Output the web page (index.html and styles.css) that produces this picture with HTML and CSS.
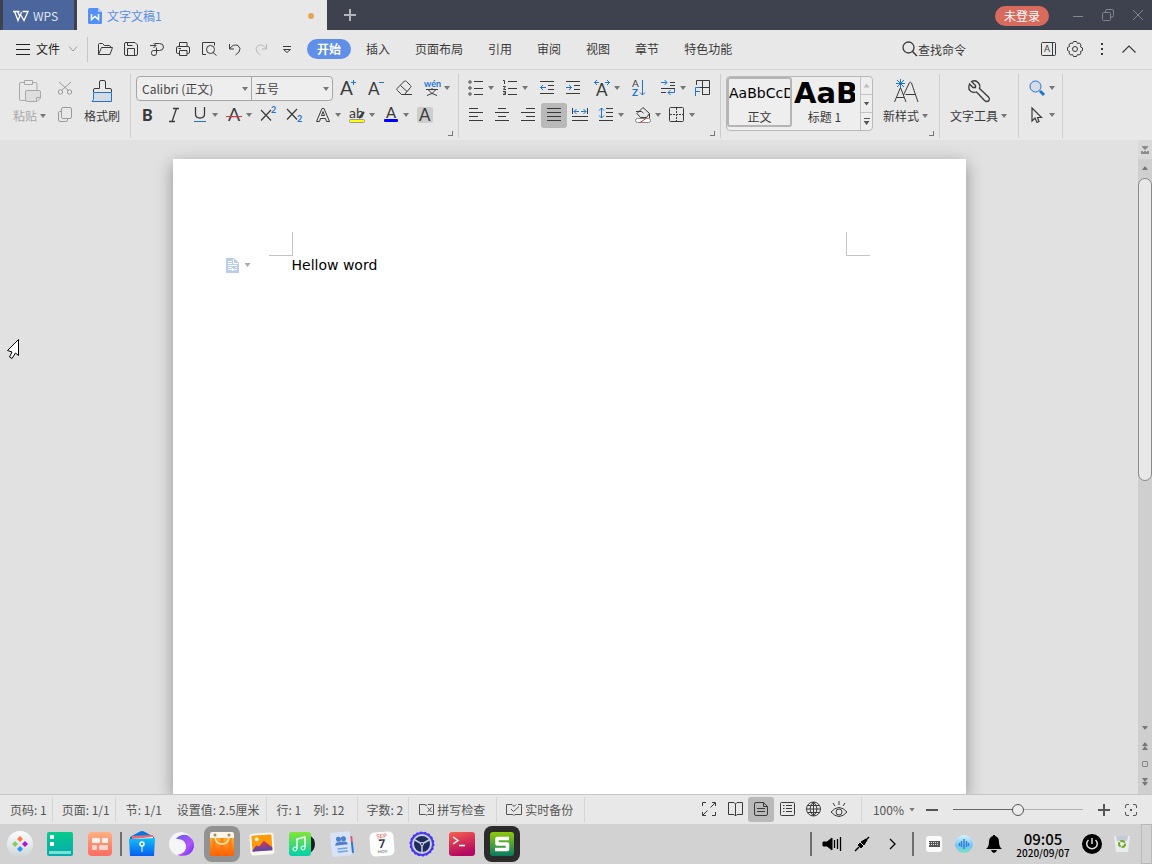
FILE: index.html
```html
<!DOCTYPE html>
<html lang="zh-CN">
<head>
<meta charset="utf-8">
<title>文字文稿1 - WPS</title>
<link rel="stylesheet" href="styles.css">
</head>
<body>
<header class="titlebar">
  <button class="wps-home"><svg class="ic" width="16" height="12" viewBox="0 0 16 12"><path class="logo-stroke" d="M0 1.500H6.500M1.500 1.500L5 10.500L8.500 2M4.500 1.500L7 7M7.500 4.500L11 10.500L15 1.500H9.500"/></svg>WPS</button>
  <div class="doc-tab"><svg width="14" height="16" viewBox="0 0 14 16"><path fill="#5590f5" d="M1.500 0H10L14 4V14.500Q14 16 12.500 16H1.500Q0 16 0 14.500V1.500Q0 0 1.500 0Z"/><path fill="#b4cdfb" d="M10 0L14 4H11Q10 4 10 3Z"/><path fill="none" stroke="#fff" stroke-width="1.500" d="M3.500 6V11.500L7 8.500L10.500 11.500V6"/></svg><span>文字文稿1</span><i class="unsaved"></i></div>
  <button class="new-tab" aria-label="新建"><svg class="ic" width="12" height="12"><path stroke-width="2" d="M6 0V12M0 6H12"/></svg></button>
  <button class="login">未登录</button>
  <div class="win-buttons">
    <button aria-label="最小化"><svg class="ic" width="12" height="12"><path d="M1 7.500H11"/></svg></button>
    <button aria-label="还原"><svg class="ic" width="12" height="12"><path d="M3.500 3.500V2Q3.500 .5 5 .5H10Q11.500 .5 11.500 2V6.500Q11.500 8 10 8H8.500"/><rect x=".5" y="3.500" width="8" height="8" rx="1"/></svg></button>
    <button aria-label="关闭"><svg class="ic" width="12" height="12"><path d="M1 1L11 11M11 1L1 11"/></svg></button>
  </div>
</header>

<nav class="menubar">
  <button class="file-menu"><svg class="ic" width="14" height="11"><path d="M0 .5H14M0 5.500H14M0 10.500H14"/></svg>文件<svg class="ic faint" width="10" height="6"><path d="M1 .5L5 5L9 .5"/></svg></button>
  <div class="quick">
    <button class="tool" aria-label="打开"><svg class="ic" width="16" height="16"><path d="M1.500 13.500V3.500Q1.500 2.500 2.500 2.500H5.500L7.500 4.500H12.500Q13.500 4.500 13.500 6.500M1.500 13.500L4.500 6.500H15.500L13 13.500Z"/></svg></button>
    <button class="tool" aria-label="保存"><svg class="ic" width="16" height="16"><path d="M1.500 3Q1.500 1.500 3 1.500H12L14.500 4V13Q14.500 14.500 13 14.500H3Q1.500 14.500 1.500 13ZM4.500 14.500V7.500H11.500V14.500M4.500 1.500V4.500H9.500"/></svg></button>
    <button class="tool" aria-label="输出为PDF"><svg class="ic" width="16" height="16"><path d="M1 4.500H7M4.500 2L7 4.500L4.500 7M6 2.500H10.500Q14.500 2.500 14.500 6Q14.500 9.500 10.500 9.500H4.500Q2.500 9.500 2.500 11.500V12.500Q2.500 14.500 5 14.500Q7.500 14.500 7.500 12.500V6.500"/></svg></button>
    <button class="tool" aria-label="打印"><svg class="ic" width="16" height="16"><path d="M4.500 5.500V1.500H12V5.500M4 12.500H2.500Q1.500 12.500 1.500 11V7Q1.500 5.500 3 5.500H13Q14.500 5.500 14.500 7V11Q14.500 12.500 13.500 12.500H12M4.500 9.500H12V14.500H4.500ZM3.500 7.500H6"/></svg></button>
    <button class="tool" aria-label="打印预览"><svg class="ic" width="16" height="16"><path d="M5 13.500H1.500V1.500H13.500V4.500M12 11.500L15.500 14.500"/><circle cx="9.500" cy="8.500" r="4"/></svg></button>
    <button class="tool" aria-label="撤销"><svg class="ic" width="16" height="16"><path d="M2.500 3V8H7M2.500 8Q6 2.500 11 4.500Q14.500 7.500 12 11L8.500 14"/></svg></button>
    <button class="tool pale" aria-label="恢复"><svg class="ic" width="16" height="16"><path d="M13.500 3V8H9M13.500 8Q10 2.500 5 4.500Q1.500 7.500 4 11L7.500 14"/></svg></button>
    <button class="tool" aria-label="自定义快速访问"><svg class="ic" width="16" height="16"><path d="M4 5.500H12M4.500 8.500H11.500L8 11.500Z"/></svg></button>
  </div>
  <div class="tabs">
    <button class="on">开始</button><button>插入</button><button>页面布局</button><button>引用</button><button>审阅</button><button>视图</button><button>章节</button><button>特色功能</button>
  </div>
  <label class="search"><svg class="ic" width="16" height="16"><circle cx="6.500" cy="6.500" r="5.500" stroke-width="1.300"/><path stroke-width="1.500" d="M10.500 10.500L15 15"/></svg><input type="text" placeholder="查找命令" aria-label="查找命令"></label>
  <div class="menu-right">
    <button class="tool" aria-label="皮肤"><svg class="ic" width="16" height="16"><rect x="1.500" y="1.500" width="14" height="13" rx="1"/><path d="M12.500 1.500V14.500"/><text class="letter" x="4" y="11" font-size="9">A</text></svg></button>
    <button class="tool" aria-label="设置"><svg class="ic" width="16" height="16"><path stroke-linejoin="round" d="M6.500 .5H9.500L10.500 2.500L12.500 2L14 4L13.500 6L15.500 7V9.500L13.500 10.500L14 12.500L12 14L10.500 13.500L9.500 15.500H6.500L5.500 13.500L3.500 14L2 12L2.500 10.500L.5 9.500V6.500L2.500 5.500L2 3.500L4 2L5.500 2.500Z"/><circle cx="8" cy="8" r="2.500"/></svg></button>
    <button class="tool" aria-label="更多"><svg class="solid" width="16" height="16"><path d="M7 2h2v2h-2zM7 7h2v2h-2zM7 12h2v2h-2z"/></svg></button>
    <button class="tool" aria-label="折叠功能区"><svg class="ic" width="16" height="16"><path stroke-width="1.200" d="M1.500 11.500L8 5L14.500 11.500"/></svg></button>
  </div>
</nav>

<section class="ribbon">
  <div class="group clip">
    <button class="big off"><svg class="ic" width="22" height="22"><path d="M7 20.500H2Q.5 20.500 .5 19V4Q.5 2.500 2 2.500H5M14 2.500H16.500Q18 2.500 18 4V10M5.500 .5H13.500V4.500H5.500Z"/><path fill="#dedede" d="M7.500 10.500H20Q21.500 10.500 21.500 12V18L18 21.500H9Q6.500 21.500 6.500 20V12Q6.500 10.500 8 10.500ZM21.500 17.500H17.500V21.500"/></svg><span>粘贴<i class="caret"></i></span></button>
    <div class="rows">
      <button class="tool faint" aria-label="剪切"><svg class="ic" width="16" height="16"><path d="M2 2L11.500 10.500M14 2L4.500 10.500"/><circle cx="3.500" cy="12" r="2.200"/><circle cx="12.500" cy="12" r="2.200"/></svg></button>
      <button class="tool faint" aria-label="复制"><svg class="ic" width="16" height="16"><path d="M4 4.500H2.500Q1.500 4.500 1.500 6V13Q1.500 14.500 3 14.500H9Q10.500 14.500 10.500 13V11.500"/><rect x="4.500" y=".5" width="10" height="11" rx="1.500"/></svg></button>
    </div>
    <button class="big"><svg class="ic" width="22" height="22"><path fill="#d6dce6" class="b" d="M2.500 12.500H20.500V21.500H1L2.500 19.500Z"/><path d="M2.500 12V10Q2.500 8.500 4 8.500H8.500V2Q8.500 .5 10 .5H13Q14.500 .5 14.500 2V8.500H19Q20.500 8.500 20.500 10V12"/></svg><span>格式刷</span></button>
  </div>

  <div class="group font-group">
    <div class="row loose">
      <div class="combo">
        <label class="family"><select aria-label="字体"><option>Calibri (正文)</option></select></label>
        <label class="size"><select aria-label="字号"><option>五号</option></select></label>
      </div>
      <button class="tool" aria-label="增大字号"><svg class="ic" width="16" height="16"><text class="letter" x="0" y="15" font-size="19">A</text><path class="b" d="M11 2.500H16M13.500 0V5"/></svg></button>
      <button class="tool" aria-label="减小字号"><svg class="ic" width="16" height="16"><text class="letter" x="0" y="15" font-size="17">A</text><path class="b" d="M11 2.500H16"/></svg></button>
      <button class="tool" aria-label="清除格式"><svg class="ic" width="16" height="16"><path d="M1 8.500L8.500 1Q9.500 .5 10.500 1.500L14.500 5.500Q15.500 6.500 14.500 7.500L8.500 14.500H5.500L1.500 10.500Q.5 9.500 1 8.500ZM4.500 5.500L11 11.500M6 14.500H16"/></svg></button>
      <button class="tool dd" aria-label="拼音指南"><svg class="ic" width="16" height="16"><text class="letter blue" x="0" y="7" font-size="9">wén</text><path d="M2 9.500H14M8 8V9.500M4.500 10Q7 14 13 15.500M11.500 10Q9 14 3 15.500"/></svg><i class="caret"></i></button>
    </div>
    <div class="row">
      <div class="cluster">
        <button class="tool" aria-label="加粗"><svg class="ic" width="16" height="16"><text class="letter heavy" x="2" y="14" font-size="16">B</text></svg></button>
        <button class="tool" aria-label="倾斜"><svg class="ic" width="16" height="16"><path stroke-width="1.300" d="M7 1.500H13M3 14.500H9M10.500 1.500L6 14.500"/></svg></button>
        <button class="tool dd" aria-label="下划线"><svg class="ic" width="16" height="16"><path stroke-width="1.300" d="M3.500 0V7Q3.500 11 8 11Q12.500 11 12.500 7V0"/><path class="b" d="M2 14.500H14"/></svg><i class="caret"></i></button>
        <button class="tool dd" aria-label="删除线"><svg class="ic" width="16" height="16"><text class="letter" x="2" y="14" font-size="18">A</text><path class="r" d="M0 9.500H16"/></svg><i class="caret"></i></button>
        <button class="tool" aria-label="上标"><svg class="ic" width="16" height="16"><path stroke-width="1.200" d="M1 3L11 13.500M11 3L1 13.500"/><text class="letter blue" x="11" y="6" font-size="9">2</text></svg></button>
        <button class="tool" aria-label="下标"><svg class="ic" width="16" height="16"><path stroke-width="1.200" d="M1 2L11 12.500M11 2L1 12.500"/><text class="letter blue" x="11" y="15" font-size="9">2</text></svg></button>
      </div>
      <div class="cluster">
        <button class="tool dd" aria-label="文字效果"><svg class="ic" width="16" height="16"><path d="M1.500 14.500L7 1.500H9L14.500 14.500H11.500L10.500 11.500H5.500L4.500 14.500ZM6.500 8.500L8 4.500L9.500 8.500Z"/></svg><i class="caret"></i></button>
        <button class="tool dd" aria-label="突出显示"><svg class="ic" width="16" height="16"><rect x=".5" y="12.500" width="15" height="3" rx="1" fill="#ff0" stroke="#999"/><text class="letter" x="0" y="11" font-size="14">ab</text><path stroke-width="2" d="M10 11L15 5"/></svg><i class="caret"></i></button>
        <button class="tool dd" aria-label="字体颜色"><svg class="ic" width="16" height="16"><text class="letter" x="3" y="11" font-size="15">A</text><rect x="1" y="12" width="14" height="3" rx="1" fill="#00f" stroke="none"/></svg><i class="caret"></i></button>
        <button class="tool" aria-label="字符底纹"><svg class="ic" width="16" height="16"><rect width="16" height="16" rx="2" fill="#cdcdcd" stroke="none"/><text class="letter" x="2" y="14" font-size="17">A</text></svg></button>
      </div>
    </div>
    <i class="launcher"></i>
  </div>

  <div class="group para-group">
    <div class="row">
      <div class="cluster">
        <button class="tool dd" aria-label="项目符号"><svg class="ic" width="16" height="16"><path d="M6 1.500H15M6 8.500H15M6 14.500H15"/><circle cx="2" cy="2" r="1.200"/><circle cx="2" cy="8" r="1.200"/><circle cx="2" cy="14" r="1.200"/></svg><i class="caret"></i></button>
        <button class="tool dd" aria-label="编号"><svg class="ic" width="16" height="16"><path d="M6 1.500H15M6 8.500H15M6 14.500H15M1 .5H2.500V4M1 6.500H3.500L1.500 9.500H4M1 11.500H3.500V14.500H1M1.500 13H3.500"/></svg><i class="caret"></i></button>
      </div>
      <div class="cluster">
        <button class="tool" aria-label="减少缩进"><svg class="ic" width="16" height="16"><path d="M1 1.500H15M9 5.500H15M9 9.500H15M1 13.500H15"/><path class="b" d="M1 7.500H7M4 5L1.500 7.500L4 10"/></svg></button>
        <button class="tool" aria-label="增加缩进"><svg class="ic" width="16" height="16"><path d="M1 1.500H15M9 5.500H15M9 9.500H15M1 13.500H15"/><path class="b" d="M1 7.500H7M4 5L6.500 7.500L4 10"/></svg></button>
      </div>
      <button class="tool dd" aria-label="字符缩放"><svg class="ic" width="16" height="16"><path class="b" d="M0 2.500H5M3 0L.5 2.500L3 5M11 2.500H16M13 0L15.500 2.500L13 5"/><text class="letter" x="2" y="16" font-size="17">A</text></svg><i class="caret"></i></button>
      <button class="tool" aria-label="排序"><svg class="ic" width="16" height="16"><text class="letter" x="1" y="7" font-size="10">A</text><text class="letter blue" x="1" y="16" font-size="10">Z</text><path class="b" d="M11.500 0V15M9 12.500L11.500 15L14 12.500"/></svg></button>
      <div class="cluster">
        <button class="tool dd" aria-label="显示编辑标记"><svg class="ic" width="16" height="16"><path d="M10 2.500H15M10 5.500H15M1 8.500H15M1 12.500H6"/><path class="b" d="M1 2.500H7M4.500 0L7 2.500L4.500 5M14.500 9V12.500H8M10.500 10L8 12.500L10.500 15"/></svg><i class="caret"></i></button>
        <button class="tool" aria-label="制表位"><svg class="ic" width="16" height="16"><path d="M2.500 5V.5H15.500V14.500H8M8.500 .5V14M5 7.500H15"/><path class="b" d="M1.500 16V7.500H6M1.500 11.500H6"/></svg></button>
      </div>
    </div>
    <div class="row">
      <div class="cluster">
        <button class="tool" aria-label="左对齐"><svg class="ic" width="16" height="16"><path d="M1 1.500H10M1 5.500H15M1 9.500H10M1 13.500H15"/></svg></button>
        <button class="tool" aria-label="居中"><svg class="ic" width="16" height="16"><path d="M4 1.500H12M1 5.500H15M4 9.500H12M1 13.500H15"/></svg></button>
        <button class="tool" aria-label="右对齐"><svg class="ic" width="16" height="16"><path d="M6 1.500H15M1 5.500H15M6 9.500H15M1 13.500H15"/></svg></button>
        <button class="tool pressed" aria-label="两端对齐"><svg class="ic" width="16" height="16"><path d="M1 1.500H15M1 5.500H15M1 9.500H15M1 13.500H15"/></svg></button>
        <button class="tool" aria-label="分散对齐"><svg class="ic" width="16" height="16"><path d="M.5 1V7M15.500 1V7M0 9.500H16M0 13.500H16"/><path class="b" d="M2 4.500H7M4.500 2L2 4.500L4.500 7M9 4.500H14M11.500 2L14 4.500L11.500 7"/></svg></button>
        <button class="tool dd" aria-label="行距"><svg class="ic" width="16" height="16"><path d="M8 1.500H15M8 5.500H15M8 9.500H15M1 13.500H15"/><path class="b" d="M3.500 1V11M1 3.500L3.500 1L6 3.500M1 8.500L3.500 11L6 8.500"/></svg><i class="caret"></i></button>
      </div>
      <div class="cluster">
        <button class="tool dd" aria-label="底纹颜色"><svg class="ic" width="16" height="16"><path d="M2 6.500L8 .5L14.500 6.500L11.500 10.500H5.500ZM1 4.500H6.500L8.500 6M14.500 6.500V11"/><rect x=".5" y="11.500" width="15" height="4" rx="2" fill="#fff" stroke="#888"/><path class="r" d="M5 15.500L11 11.500"/></svg><i class="caret"></i></button>
        <button class="tool dd" aria-label="边框"><svg class="ic" width="16" height="16"><rect x=".5" y=".5" width="14" height="14" rx="1"/><path stroke-dasharray="2 1" d="M7.500 1V14M1 7.500H14"/></svg><i class="caret"></i></button>
      </div>
    </div>
    <i class="launcher"></i>
  </div>

  <div class="group style-group">
    <div class="gallery">
      <button class="style-item chosen"><span class="preview">AaBbCcD</span><span class="name">正文</span></button>
      <button class="style-item"><span class="preview heading">AaB</span><span class="name">标题 1</span></button>
      <div class="gallery-nav">
        <button class="off" aria-label="上一行"><i class="caret up"></i></button>
        <button aria-label="下一行"><i class="caret"></i></button>
        <button class="all" aria-label="展开样式"><i class="bar"></i><i class="caret"></i></button>
      </div>
    </div>
    <button class="big"><svg class="ic" width="24" height="22"><path d="M.5 22L6.500 7.500L12 22M2.500 17.500H10M9.500 15L15.500 2.500Q16.500 1.500 17.500 3L24 22M11.500 14.500H21.500"/><path class="b" d="M6.500-1V8M2 3.500H11M3 0L10 7M10 0L3 7"/></svg><span>新样式<i class="caret"></i></span></button>
    <i class="launcher"></i>
  </div>

  <div class="group tools-group">
    <button class="big"><svg class="ic" width="22" height="22"><path stroke-width="1.300" d="M3.500 1.500L7.500 5.500V7.500H5L1.500 4Q-.5 9 3 11.500Q5.500 13 8.500 12L16.500 20.500Q19 22.500 21 20.500Q22 18.500 20.500 17L11.500 8.500Q12.500 5 10.500 3Q7.500 -.5 3.500 1.500Z"/></svg><span>文字工具<i class="caret"></i></span></button>
  </div>

  <div class="group find-group">
    <div class="rows">
      <button class="tool dd" aria-label="查找替换"><svg class="ic" width="16" height="16"><circle class="b" cx="6.500" cy="6.500" r="5.500" fill="#d5dce6"/><path class="b" stroke-width="3" d="M11 11L15 15"/></svg><i class="caret"></i></button>
      <button class="tool dd" aria-label="选择"><svg class="ic" width="16" height="16"><path stroke-width="1.200" d="M3 1V14L6 11L8 15.500L10 14.500L8.500 10.500H12.500Z"/></svg><i class="caret"></i></button>
    </div>
  </div>
</section>

<main class="workspace">
  <div class="canvas">
    <article class="paper">
      <div class="margin-marks"><i class="mark left"></i><i class="mark right"></i></div>
      <div class="line">
        <button class="para-menu" aria-label="段落布局"><svg width="13" height="15"><path fill="#b9cdea" d="M0 0H8L13 5V15H0Z"/><path fill="none" stroke="#fff" d="M7.500 1V5.500H12M2 3.500H6M2 5.500H6M2 7.500H11M2 9.500H6M2 11.500H11M6.500 10V13M9.500 9.500H11"/></svg><i class="caret"></i></button>
        <p>Hellow word</p>
      </div>
    </article>
  </div>
  <aside class="scrollbar">
    <button class="ruler" aria-label="标尺"><svg class="solid" width="8" height="8"><path d="M1 0H7V1L4 4L1 1ZM0 5H2V6H3V5H5V6H6V5H8V8H0Z"/></svg></button>
    <button class="step" aria-label="向上"><i class="caret up"></i></button>
    <div class="track"><div class="thumb"></div></div>
    <div class="jumps">
      <button aria-label="向下"><i class="caret"></i></button>
      <button aria-label="上一页"><i class="caret up"></i><i class="caret up"></i></button>
      <button aria-label="选择浏览对象"><i class="square"></i></button>
      <button aria-label="下一页"><i class="caret"></i><i class="caret"></i></button>
    </div>
  </aside>
  <svg class="pointer" width="14" height="22" viewBox="0 0 14 22"><path fill="#fff" stroke="#000" d="M11.500 1.500V17.500L8.500 15L5 20.500L2.500 19L5 14L.5 12.500L11.500 1.500Z"/></svg>
</main>

<footer class="statusbar">
  <span class="cell">页码: 1</span>
  <span class="cell">页面: 1/1</span>
  <span class="cell section"><span>节: 1/1</span><span>设置值: 2.5厘米</span></span>
  <span class="cell place"><span>行: 1</span><span>列: 12</span></span>
  <span class="cell">字数: 2</span>
  <button class="cell check"><svg class="ic" width="16" height="16"><path d="M9 13.500L7.500 12.500H1.500V2.500H7L8.500 4M10 2.500H15.500V12.500H9.500M8 2.500V4M9.500 5.500L13.500 10M13.500 5.500L9.500 10"/></svg>拼写检查</button>
  <button class="cell check"><svg class="ic" width="16" height="16"><path d="M8 13.500L7 12.500H.5V2.500H6L8 4.500L10 2.500M13 12.500H9L8 13.500M12 2.500H15.500V12.500H12M5 7L7.500 9.500L13 4.500"/></svg>实时备份</button>
  <div class="views">
    <button class="tool" aria-label="全屏显示"><svg class="ic" width="16" height="16"><path d="M1.500 5V1.500H5M11 1.500H14.500V5M14.500 11V14.500H11M5 14.500H1.500V11M2 14L6.500 9.500M14 2L9.500 6.500"/></svg></button>
    <button class="tool" aria-label="阅读版式"><svg class="ic" width="16" height="16"><path d="M8.500 15V3L7 1.500H1.500V13.500H7L8.500 15L10 13.500H15.500V1.500H10L8.500 3"/></svg></button>
    <button class="tool pressed" aria-label="页面视图"><svg class="ic" width="16" height="16"><path d="M1.500 3Q1.500 1.500 3 1.500H10.500L14.500 5.500V13Q14.500 14.500 13 14.500H3Q1.500 14.500 1.500 13ZM10.500 1.500V5.500H14.500M4 7.500H12M4 10.500H12"/></svg></button>
    <button class="tool" aria-label="大纲视图"><svg class="ic" width="16" height="16"><rect x="1.500" y="1.500" width="14" height="13" rx="1"/><path d="M4 4.500H5.500M7 4.500H13M4 7.500H5.500M7 7.500H13M4 10.500H5.500M7 10.500H13"/></svg></button>
    <button class="tool" aria-label="Web版式"><svg class="ic" width="16" height="16"><circle cx="8.500" cy="8" r="7"/><path d="M8.500 1V15M1.500 8H15.500M2.500 4.500H14.500M2.500 11.500H14.500M8.500 1Q1.500 8 8.500 15Q15.500 8 8.500 1"/></svg></button>
    <button class="tool" aria-label="护眼模式"><svg class="ic" width="16" height="16"><path d="M0 11Q8 2 16 11Q8 20 0 11ZM8 0V4M2 2L4 5M14 2L12 5"/><circle cx="8" cy="11" r="3"/></svg></button>
  </div>
  <div class="zoom">
    <button class="percent">100%<i class="caret"></i></button>
    <button aria-label="缩小"><svg class="ic" width="12" height="12"><path stroke-width="2" d="M0 6H12"/></svg></button>
    <input type="range" min="0" max="100" value="50" aria-label="缩放">
    <button aria-label="放大"><svg class="ic" width="12" height="12"><path stroke-width="2" d="M0 6H12M6 0V12"/></svg></button>
    <button class="fit" aria-label="适合页面"><svg class="ic" width="12" height="12"><path d="M.5 4V2Q.5 .5 2 .5H4M8 .5H10Q11.500 .5 11.500 2V4M11.500 8V10Q11.500 11.500 10 11.500H8M4 11.500H2Q.5 11.500 .5 10V8"/><path stroke-width="2" d="M5 6H7"/></svg></button>
  </div>
</footer>

<footer class="taskbar">
  <button aria-label="启动器"><svg width="28" height="28"><defs><linearGradient id="lau" x2="0" y2="1"><stop stop-color="#fdfdfd"/><stop offset="1" stop-color="#cdd6d8"/></linearGradient></defs><circle cx="14" cy="14" r="13" fill="url(#lau)"/><path fill="#ff7a45" d="M14 6L17 9L14 12L11 9Z"/><path fill="#8bc96a" d="M9 11L12 14L9 17L6 14Z"/><path fill="#b012dd" d="M19 11L22 14L19 17L16 14Z"/><path fill="#2c93f2" d="M14 16L17 19L14 22L11 19Z"/></svg></button>
  <button aria-label="多任务视图"><svg width="28" height="28"><defs><linearGradient id="mul" x2="0" y2="1"><stop stop-color="#07cc88"/><stop offset="1" stop-color="#06a9b4"/></linearGradient></defs><rect x="1" y="2" width="26" height="24" rx="2" fill="url(#mul)"/><path fill="#fff" d="M4 5h4v4h-4zM4 12h4v4h-4z"/><rect x="3" y="21" width="22" height="3" fill="#79e4cf"/></svg></button>
  <button aria-label="桌面"><svg width="28" height="28"><defs><linearGradient id="dsk" x2="0" y2="1"><stop stop-color="#ffb083"/><stop offset="1" stop-color="#ff6b61"/></linearGradient></defs><rect x="2" y="2" width="24" height="24" rx="4" fill="url(#dsk)"/><g fill="#fff1e9"><rect x="6" y="8" width="8" height="5" rx="1"/><rect x="16" y="8" width="6" height="5" rx="1"/><rect x="6" y="15" width="5" height="5" rx="1" opacity=".75"/><rect x="13" y="15" width="9" height="5" rx="1" opacity=".75"/></g></svg></button>
  <i class="split"></i>
  <button aria-label="文件管理器"><svg width="28" height="28"><defs><linearGradient id="fil" x2="0" y2="1"><stop stop-color="#12bff5"/><stop offset="1" stop-color="#075df1"/></linearGradient></defs><path fill="#0878de" d="M2 7L11 2Q14 0 17 2L26 7V13H2Z"/><path fill="#fff" d="M4 6H25V10H4Z"/><path fill="#f46a6a" d="M4 6L25 5V7L4 9Z"/><path fill="url(#fil)" d="M1 9L27 8L26 26H2Z"/><circle cx="14" cy="14" r="2" fill="none" stroke="#fff" stroke-width="1.500"/><path stroke="#fff" d="M14 16V22"/></svg></button>
  <button aria-label="浏览器"><svg width="28" height="28"><defs><linearGradient id="web" x2="1" y2="1"><stop stop-color="#5b5ff0"/><stop offset=".6" stop-color="#b354f7"/><stop offset="1" stop-color="#4b2df2"/></linearGradient></defs><circle cx="13" cy="14" r="12" fill="#f5f5f8"/><path fill="url(#web)" d="M8 9Q12 4 19 5Q27 9 26 17Q24 26 13 26L9 25Q19 23 18 15Q16 8 8 9Z"/></svg></button>
  <button class="running" aria-label="应用商店"><svg width="28" height="28"><defs><linearGradient id="bag" x2="0" y2="1"><stop stop-color="#ffab2e"/><stop offset="1" stop-color="#ff5b04"/></linearGradient></defs><path fill="#fff4e8" d="M4 2H24Q26 2 26 4V9H2V4Q2 2 4 2Z"/><path fill="url(#bag)" d="M2 8H26V24Q26 26 24 26H4Q2 26 2 24Z"/><path stroke="#f77505" stroke-width="3" opacity=".6" d="M6 8V26M14 8V26M22 8V26"/><path fill="none" stroke="#fff3d0" stroke-width="1.500" d="M7 5V8Q8 14 14 14Q20 14 21 8V5"/><circle cx="7" cy="5" r="1.500" fill="#ad8570"/><circle cx="21" cy="5" r="1.500" fill="#ad8570"/></svg></button>
  <button aria-label="相册"><svg width="28" height="28"><defs><linearGradient id="pic" x2="0" y2="1"><stop stop-color="#e8323c"/><stop offset="1" stop-color="#4a48b8"/></linearGradient></defs><g transform="rotate(-4 14 14)"><rect x="2" y="3" width="24" height="22" rx="3" fill="#faf6f0"/><rect x="4" y="5" width="20" height="16" rx="1" fill="#ff9a09"/><circle cx="9" cy="9" r="2" fill="#fff3c8"/><path fill="url(#pic)" d="M4 20L8 15L11 16L16 11L24 18V21H4Z"/></g></svg></button>
  <button aria-label="音乐"><svg width="28" height="28"><defs><linearGradient id="mus" x2="0" y2="1"><stop stop-color="#80e635"/><stop offset="1" stop-color="#03cfaf"/></linearGradient></defs><path fill="#122" d="M20 4Q27 8 27 14Q27 21 20 24Z"/><rect x="1" y="2" width="22" height="24" rx="3" fill="url(#mus)"/><path fill="none" stroke="#fff" stroke-width="1.500" d="M9 19V9L17 7V17"/><circle cx="7" cy="19" r="2" fill="none" stroke="#fff"/><circle cx="15" cy="18" r="2" fill="none" stroke="#fff"/></svg></button>
  <button aria-label="联系人"><svg width="28" height="28"><g transform="rotate(-6 14 14)"><path fill="#e95668" d="M22 7H25V13H22Z"/><path fill="#2c78df" d="M22 13H25V24H22Z"/><rect x="3" y="2" width="20" height="24" rx="2" fill="#d7e3f7"/><g fill="#4e7fcf"><circle cx="11" cy="9" r="2.500"/><circle cx="16" cy="9" r="2.500"/><path d="M7 15Q8 11 11 12Q14 11 16 12Q19 11 20 15Z"/></g><path stroke="#75a1e6" stroke-width="1.500" d="M9 18.500H19M9 21.500H19"/></g></svg></button>
  <button aria-label="日历"><svg width="28" height="28"><g transform="rotate(-4 14 14)"><rect x="2" y="2" width="24" height="24" rx="5" fill="#fff"/><text class="cal-month" x="14" y="8" font-size="6">SEP</text><text class="cal-day" x="14" y="18" font-size="12">7</text><text class="cal-week" x="14" y="23" font-size="4">MON</text></g></svg></button>
  <button aria-label="控制中心"><svg width="28" height="28"><circle cx="14" cy="14" r="11" fill="#c9cfdd" stroke="#4b3df0" stroke-width="2"/><circle cx="14" cy="14" r="11.500" fill="none" stroke="#4636ef" stroke-width="2" stroke-dasharray="2 2"/><circle cx="14" cy="14" r="8" fill="#1f2b5c"/><path stroke="#c9cfdd" stroke-width="1.500" d="M14 14V22M14 14L7 10M14 14L21 10"/><circle cx="14" cy="14" r="2" fill="#c9cfdd"/><circle cx="14" cy="14" r="1" fill="#1f2b5c"/></svg></button>
  <button aria-label="终端"><svg width="28" height="28"><defs><linearGradient id="ter" x2=".3" y2="1"><stop stop-color="#f7604a"/><stop offset="1" stop-color="#b40862"/></linearGradient></defs><rect x="1" y="2" width="26" height="24" rx="3" fill="url(#ter)"/><path fill="none" stroke="#fff" stroke-width="1.500" d="M5 7L10 10.500L5 14M11 15.500H17"/></svg></button>
  <button class="front" aria-label="WPS"><svg width="28" height="28"><defs><linearGradient id="wps" x2="0" y2="1"><stop stop-color="#91c80c"/><stop offset="1" stop-color="#087c61"/></linearGradient></defs><rect x="2" y="2" width="24" height="24" rx="3" fill="url(#wps)"/><path fill="none" stroke="#fff" stroke-width="3.500" stroke-linejoin="round" d="M21 8.500H9V14H19.500V19.500H7"/></svg></button>

  <div class="tray">
    <i class="split"></i>
    <div class="tray-set">
      <button aria-label="音量"><svg class="ic black" width="20" height="16"><path fill="#000" d="M1 6H5L10 2V14L5 10H1Z"/><path stroke-width="1.300" d="M12.500 4V12M15.500 3V13M18.500 1V15"/></svg></button>
      <button aria-label="网络"><svg class="ic black" width="16" height="16"><path stroke-width="1.500" d="M1 15L5 11M11 5L15 1"/><path fill="#000" d="M4 9L7 12L9 10L6 7ZM7 6L12 3L13 4L10 9Z"/></svg></button>
      <button aria-label="展开托盘"><svg class="ic black" width="10" height="12"><path stroke-width="1.300" d="M3 1L8 6L3 11"/></svg></button>
    </div>
    <i class="split"></i>
    <div class="tray-set">
      <button aria-label="键盘"><svg width="18" height="18"><rect x="1" y="1" width="16" height="16" rx="3" fill="#fafafa"/><rect x="4" y="6" width="11" height="6" fill="#555"/><path stroke="#ddd" stroke-dasharray="1 1" d="M4 7.500H14M4 9.500H14"/></svg></button>
      <button aria-label="语音助手"><svg width="18" height="18"><defs><linearGradient id="voi" x2="0" y2="1"><stop stop-color="#dcf3ff"/><stop offset=".6" stop-color="#6fc3f7"/><stop offset="1" stop-color="#78e4c0"/></linearGradient></defs><circle cx="9" cy="9" r="9" fill="url(#voi)"/><path stroke="#3480d2" stroke-width="1.500" d="M4.500 8V11M6.500 6V12M9 4V14M11.500 6V12M13.500 8V11"/></svg></button>
      <button aria-label="通知"><svg class="solid black" width="16" height="18"><path d="M7 0H9V1Q13 2 13 7Q13 12 16 14H0Q3 12 3 7Q3 2 7 1ZM5 15H11Q10 18 8 18Q6 18 5 15Z"/></svg></button>
    </div>
    <div class="clock"><time class="hour">09:05</time><time class="date">2020/09/07</time></div>
    <div class="tray-set">
      <button aria-label="电源"><svg width="20" height="20"><circle cx="10" cy="10" r="10"/><path fill="none" stroke="#ddd" stroke-width="1.500" d="M6.500 6Q3.500 9 5.500 12.500Q10 17 14.500 12.500Q16.500 9 13.500 6M10 4V10"/></svg></button>
      <button aria-label="回收站"><svg width="16" height="18"><path fill="#e9ecef" d="M0 1H16L14 17H2Z"/><path fill="#c3cad8" d="M2 1H14L13 6H3Z"/><circle cx="8" cy="9" r="3" fill="none" stroke="#74a51e" stroke-width="2" stroke-dasharray="5 1"/></svg></button>
    </div>
    <button class="show-desktop" aria-label="显示桌面"></button>
  </div>
</footer>
</body>
</html>
```
FILE: styles.css
```css
* { box-sizing: border-box; }

body {
  margin: 0;
  height: 100vh;
  display: flex;
  flex-direction: column;
  overflow: hidden;
  background: #e8e8e8;
  color: #3a3a3a;
  font: 12px/16px "Noto Sans CJK SC", sans-serif;
}

button {
  margin: 0;
  padding: 0;
  border: 0;
  background: none;
  color: inherit;
  font: inherit;
  white-space: nowrap;
}

svg { display: block; flex: none; }
.ic { fill: none; stroke: currentColor; stroke-width: 1; overflow: visible; }
.solid { fill: currentColor; }
.b { stroke: #1f74cf; }
.r { stroke: #d9383a; }
.black { color: #000; }
.faint { color: #9a9a9a; }
.pale { color: #b8b8b8; }

.letter { fill: #3a3a3a; stroke: none; font-family: Lato, sans-serif; font-weight: 400; }
.letter.heavy { font-weight: 900; }
.letter.blue { fill: #1f74cf; font-weight: 700; }

.caret {
  display: block;
  flex: none;
  width: 6px;
  height: 4px;
  background: #777;
  clip-path: polygon(0 0, 100% 0, 50% 100%);
}
.caret.up { clip-path: polygon(0 100%, 100% 100%, 50% 0); }

/* Title bar */
.titlebar {
  display: flex;
  align-items: center;
  flex: none;
  height: 30px;
  padding-left: 3px;
  background: #3e414e;
}
.wps-home {
  display: flex;
  align-items: center;
  gap: 4px;
  width: 71px;
  height: 30px;
  padding: 2px 0 0 10px;
  background: #4a669d;
  color: #dfe5f0;
}
.logo-stroke { stroke: #fff; stroke-width: 1.3; }
.doc-tab {
  display: flex;
  align-items: center;
  gap: 5px;
  width: 250px;
  height: 30px;
  margin-left: 3px;
  padding: 2px 13px 0 11px;
  background: #e8e8e8;
  color: #5a8de8;
}
.unsaved {
  width: 6px;
  height: 6px;
  margin-left: auto;
  border-radius: 50%;
  background: #e8a15a;
}
.new-tab { margin-left: 17px; color: #b4b5bb; }
.login {
  height: 20px;
  margin: 2px 23px 0 auto;
  padding: 0 9px;
  border-radius: 10px;
  background: #d96a5e;
  color: #fff;
}
.win-buttons { display: flex; gap: 18px; padding-right: 8px; color: #84868f; }

/* Menu bar */
.menubar {
  display: flex;
  align-items: center;
  flex: none;
  height: 40px;
  padding: 0 10px 1px 16px;
  border-bottom: 1px solid #d4d4d4;
}
.file-menu {
  display: flex;
  align-items: center;
  gap: 6px;
  height: 25px;
  padding-right: 9px;
  border-right: 1px solid #c6c6c6;
  color: #222;
}
.file-menu .faint { margin-left: 2px; }
.quick { display: flex; margin-left: 4px; }
.tool {
  display: flex;
  flex: none;
  width: 26px;
  height: 25px;
  padding: 4px 5px 5px;
  border-radius: 3px;
}
.tool.dd { align-items: center; gap: 4px; width: 34px; padding-right: 3px; }
.tool.pressed { background: #b9b9b9; }
.tabs { display: flex; gap: 5px; margin-left: 7px; }
.tabs button { height: 20px; padding: 0 10px; border-radius: 10px; }
.tabs .on { background: #5f8fe8; color: #fff; font-weight: 700; }
.search { display: flex; align-items: center; margin-left: auto; }
.search input {
  width: 70px;
  height: 20px;
  padding: 0;
  border: 0;
  background: none;
  color: inherit;
  font: inherit;
}
.search input::placeholder { color: #3a3a3a; opacity: 1; }
.menu-right { display: flex; gap: 1px; margin-left: 47px; }

/* Ribbon */
.ribbon { display: flex; flex: none; height: 70px; padding: 4px 0 2px; }
.group {
  position: relative;
  display: flex;
  flex: none;
  padding-top: 2px;
  border-right: 1px solid #cdcdcd;
}
.clip { gap: 6px; padding-left: 13px; padding-right: 10px; }
.rows, .font-group, .para-group { flex-direction: column; gap: 2px; }
.rows { display: flex; }
.font-group, .para-group { padding-left: 4px; padding-right: 5px; }
.row { display: flex; gap: 3px; height: 25px; }
.row.loose { gap: 2px; }
.cluster { display: flex; }
.big {
  display: flex;
  flex-direction: column;
  align-items: center;
  gap: 6px;
  height: 54px;
  padding-top: 4px;
}
.big span { display: flex; align-items: center; gap: 3px; }
.big.off { color: #a8a8a8; }
.launcher {
  position: absolute;
  right: 5px;
  bottom: 2px;
  width: 5px;
  height: 5px;
  border: solid #777;
  border-width: 0 1px 1px 0;
}

.combo {
  display: flex;
  width: 197px;
  margin-left: 1px;
  border: 1px solid #a6a6a6;
  border-radius: 4px;
  background: #eee;
}
.combo label { position: relative; display: flex; }
.combo label::after {
  content: "";
  position: absolute;
  right: 3px;
  top: 10px;
  width: 6px;
  height: 4px;
  background: #777;
  clip-path: polygon(0 0, 100% 0, 50% 100%);
}
.combo select {
  width: 100%;
  padding: 0 0 0 5px;
  border: 0;
  appearance: none;
  background: none;
  color: #444;
  font: inherit;
}
.family { width: 115px; border-right: 1px solid #a6a6a6; }
.size { flex: 1; }
.combo .size select { padding-left: 3px; }

.style-group { gap: 10px; padding-left: 5px; padding-right: 11px; }
.gallery {
  display: flex;
  width: 147px;
  height: 55px;
  border: 1px solid #b8b8b8;
  border-radius: 4px;
  background: #eee;
}
.style-item {
  width: 65px;
  height: 50px;
  border: 2px solid transparent;
  border-radius: 3px;
}
.style-item.chosen { border-color: #b5b5b5; }
.preview {
  display: block;
  height: 28px;
  margin-bottom: 2px;
  overflow: hidden;
  color: #000;
  font: 14px/28px "DejaVu Sans", sans-serif;
  text-align: left;
}
.preview.heading { font-size: 29px; font-weight: 700; }
.name { display: block; }
.gallery-nav {
  display: flex;
  flex-direction: column;
  width: 12px;
  margin-left: auto;
  border-left: 1px solid #c4c4c4;
}
.gallery-nav button {
  display: flex;
  flex: 1;
  flex-direction: column;
  align-items: center;
  justify-content: center;
  gap: 2px;
}
.gallery-nav button + button { border-top: 1px solid #c4c4c4; }
.gallery-nav .caret { background: #555; }
.gallery-nav .off .caret { background: #bbb; }
.bar { width: 6px; height: 1px; background: #555; }
.tools-group { padding-left: 10px; padding-right: 11px; }
.find-group { padding-left: 5px; padding-right: 4px; }

/* Document area */
.workspace {
  position: relative;
  display: flex;
  flex: 1;
  min-height: 0;
  background: #e1e1e1;
}
.canvas {
  display: flex;
  flex: 1;
  justify-content: center;
  padding-top: 19px;
  overflow: hidden;
}
.paper {
  width: 100%;
  max-width: 793px;
  padding-top: 73px;
  background: #fff;
  box-shadow: 0 5px 16px rgba(0, 0, 0, .36);
}
.margin-marks { display: flex; justify-content: space-between; padding: 0 96px; }
.mark { width: 24px; height: 24px; border: 0 solid #c4c4c4; border-bottom-width: 1px; }
.mark.left { border-right-width: 1px; }
.mark.right { border-left-width: 1px; }
.line { display: flex; align-items: center; gap: 41px; padding-left: 53px; }
.para-menu { display: flex; align-items: center; gap: 6px; width: 25px; }
.para-menu .caret { background: #aaa; }
.line p {
  margin: 0;
  color: #000;
  font: 14px/18px "DejaVu Sans", sans-serif;
}
.scrollbar {
  display: flex;
  flex-direction: column;
  width: 14px;
  background: #cfcfcf;
  color: #8a8a8a;
}
.scrollbar button {
  display: flex;
  flex: none;
  flex-direction: column;
  align-items: center;
  justify-content: center;
}
.ruler { height: 19px; background: #d9d9d9; }
.step { height: 19px; padding-bottom: 1px; }
.track { flex: 1; }
.thumb {
  height: 56%;
  border: 1px solid #8a8a8a;
  border-radius: 7px;
  background: #e8e8e8;
}
.jumps { display: flex; flex-direction: column; padding-bottom: 3px; }
.jumps button { height: 18px; }
.square { width: 6px; height: 6px; border: 1px solid #858585; border-radius: 1px; }
.pointer { position: absolute; left: 7px; top: 198px; }

/* Status bar */
.statusbar {
  display: flex;
  flex: none;
  height: 30px;
  padding: 2px 15px 2px 1px;
  border-top: 1px solid #c6c6c6;
  color: #555;
}
.cell {
  display: flex;
  flex: none;
  align-items: center;
  padding: 0 5px 0 9px;
  border-right: 1px solid #d6d6d6;
}
.cell.section { gap: 15px; padding-left: 10px; padding-right: 6px; }
.cell.place { gap: 12px; padding-left: 10px; padding-right: 12px; }
.cell.check { gap: 3px; padding-right: 11px; }
.views { display: flex; margin-left: auto; padding-right: 9px; border-right: 1px solid #d6d6d6; color: #3a3a3a; }
.zoom { display: flex; align-items: center; gap: 15px; padding-left: 11px; }
.percent { display: flex; align-items: center; gap: 5px; margin-right: -4px; }
.zoom input {
  width: 130px;
  height: 14px;
  margin: 0;
  appearance: none;
  background: linear-gradient(90deg, #666 50%, #b0b0b0 50%) center / 100% 1px no-repeat;
}
.zoom input::-webkit-slider-thumb {
  appearance: none;
  width: 12px;
  height: 12px;
  border: 1px solid #555;
  border-radius: 50%;
  background: #ececec;
}

/* Desktop taskbar */
.taskbar {
  display: flex;
  align-items: center;
  flex: none;
  height: 40px;
  background: #d2d2d2;
}
.taskbar > button {
  display: flex;
  align-items: center;
  justify-content: center;
  width: 36px;
  height: 36px;
  margin: 2px;
  border-radius: 8px;
}
.running { background: #929292; }
.front { background: #2b2b2b; }
.cal-month { fill: #e04b4b; font-family: Lato, sans-serif; text-anchor: middle; }
.cal-day { fill: #1d2740; font-family: Lato, sans-serif; font-weight: 700; text-anchor: middle; }
.cal-week { fill: #555; font-family: Lato, sans-serif; text-anchor: middle; }
.split { width: 2px; height: 24px; background: #6e6e6e; }
.tray { display: flex; align-items: center; margin-left: auto; }
.tray .split + .tray-set { margin-left: 5px; }
.tray-set + .split { margin-left: 5px; }
.tray-set { display: flex; }
.tray-set button { display: flex; align-items: center; justify-content: center; width: 30px; height: 30px; }
.clock {
  display: flex;
  flex-direction: column;
  align-items: center;
  width: 68px;
  color: #000;
  font-weight: 500;
}
.hour { font-size: 15px; line-height: 16px; }
.date { font-size: 10px; line-height: 11px; }
.show-desktop { width: 11px; height: 40px; margin-left: 4px; border: 1px solid #b8b8b8; }
```
